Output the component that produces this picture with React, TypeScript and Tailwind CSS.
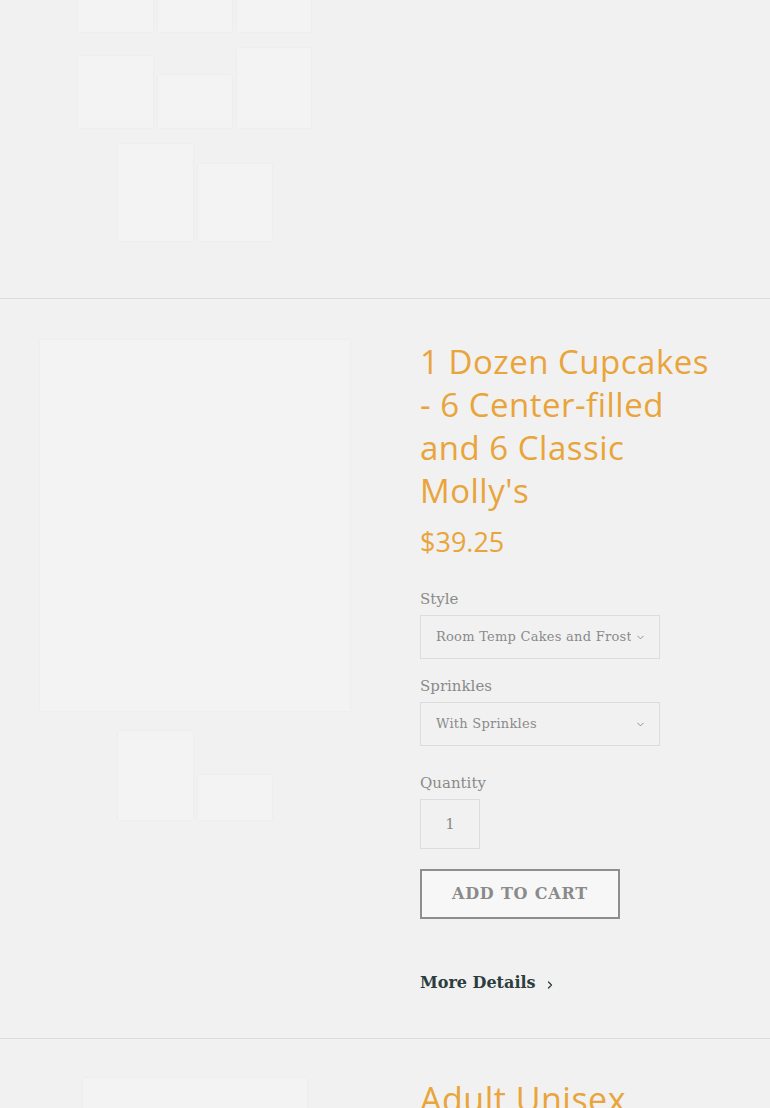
import { ChevronDown, ChevronRight } from "lucide-react";

const serif = "font-['DejaVu_Serif','Liberation_Serif',serif]";
const sans = "font-['Open_Sans','Noto_Sans',sans-serif]";

function Ph({ className }: { className: string }) {
  return <div className={"bg-[#f3f3f3] shadow-[0_0_3px_rgba(0,0,0,0.035)] " + className} />;
}

function Select({ value }: { value: string }) {
  return (
    <div className="w-[240px] h-[44px] border border-[#dcdcdc] flex items-center pl-[15px] pr-[13px] gap-[4px]">
      <span className={serif + " text-[13px] tracking-[0.25px] text-[#8a8a8a] whitespace-nowrap overflow-hidden flex-1"}>{value}</span>
      <ChevronDown size={11} strokeWidth={2} className="text-[#8a8a8a] shrink-0" />
    </div>
  );
}

export default function App() {
  return (
    <div className="min-h-[1108px] bg-[#f1f1f1] overflow-hidden">
      {/* previous product, thumbnails only */}
      <div className="h-[299px] flex flex-col border-b border-[#dcdcdc]">
        <div className="ml-[78px] w-[233px] -mt-[28px] flex flex-wrap justify-center items-end gap-x-[5px] gap-y-[16px]">
          <Ph className="w-[75px] h-[60px]" />
          <Ph className="w-[74px] h-[60px]" />
          <Ph className="w-[74px] h-[60px]" />
          <Ph className="w-[75px] h-[72px]" />
          <Ph className="w-[74px] h-[53px]" />
          <Ph className="w-[74px] h-[80px]" />
          <Ph className="w-[75px] h-[97px]" />
          <Ph className="w-[74px] h-[77px]" />
        </div>
      </div>

      {/* current product */}
      <div className="flex pt-[41px] pb-[43px] border-b border-[#dcdcdc]">
        <div className="ml-[40px] w-[310px] flex flex-col items-center gap-[20px]">
          <Ph className="w-[310px] h-[371px]" />
          <div className="flex items-end gap-[5px]">
            <Ph className="w-[75px] h-[89px]" />
            <Ph className="w-[74px] h-[45px]" />
          </div>
        </div>

        <div className="ml-[70px] w-[310px] flex flex-col">
          <h1 className={sans + " w-[300px] text-[33px] leading-[43px] text-[#e9a43a] tracking-[0.5px]"}>
            1 Dozen Cupcakes - 6 Center-filled and 6 Classic Molly's
          </h1>
          <div className={sans + " mt-[12px] text-[27px] leading-[36px] text-[#e9a43a]"}>$39.25</div>

          <label className={serif + " mt-[28px] text-[15px] leading-[22px] text-[#8a8a8a]"}>Style</label>
          <div className="mt-[5px]">
            <Select value="Room Temp Cakes and Frosting" />
          </div>

          <label className={serif + " mt-[16px] text-[15px] leading-[22px] text-[#8a8a8a]"}>Sprinkles</label>
          <div className="mt-[5px]">
            <Select value="With Sprinkles" />
          </div>

          <label className={serif + " mt-[26px] text-[15px] leading-[22px] text-[#8a8a8a]"}>Quantity</label>
          <div className={serif + " mt-[5px] w-[60px] h-[50px] border border-[#dcdcdc] flex items-center justify-center text-[15px] text-[#8a8a8a]"}>
            1
          </div>

          <button className={serif + " mt-[20px] w-[200px] h-[50px] border-2 border-[#8e8e8e] bg-[#f7f7f7] text-[16px] font-bold tracking-[0.8px] text-[#8a8a8a]"}>
            ADD TO CART
          </button>

          <a className={serif + " mt-[52px] flex items-center gap-[8px] text-[16px] font-bold text-[#2c3d3e]"}>
            More Details
            <ChevronRight size={12} strokeWidth={2.5} className="mt-[3px]" />
          </a>
        </div>
      </div>

      {/* next product */}
      <div className="flex pt-[39px]">
        <div className="ml-[83px] w-[224px]">
          <Ph className="w-[224px] h-[300px]" />
        </div>
        <div className="ml-[113px] w-[310px]">
          <h1 className={sans + " text-[34px] leading-[43px] text-[#e9a43a] tracking-[0.5px]"}>Adult Unisex</h1>
        </div>
      </div>
    </div>
  );
}
